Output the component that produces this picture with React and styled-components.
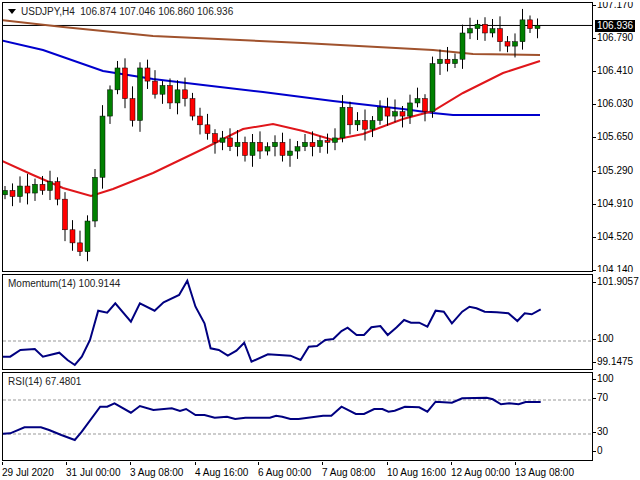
import React from 'react'
import styled, { createGlobalStyle } from 'styled-components'

const Global = createGlobalStyle`
  html, body { margin: 0; background: #fff; }
  body { font-family: "Liberation Sans", Arial, sans-serif; }
`

const closes = [105.05, 104.98, 105.1, 105.02, 105.12, 105.05, 105.15, 104.95, 104.6, 104.45, 104.35, 104.7,
  105.2, 105.9, 106.2, 106.45, 106.1, 105.85, 106.45, 106.3, 106.15, 106.25, 106.05, 106.2, 106.1, 105.9,
  105.8, 105.7, 105.6, 105.65, 105.55, 105.6, 105.45, 105.6, 105.5, 105.55, 105.6, 105.45, 105.5, 105.55,
  105.6, 105.55, 105.62, 105.6, 105.65, 106.0, 105.8, 105.85, 105.75, 105.85, 106.0, 105.9, 105.95, 105.9,
  106.05, 106.1, 105.95, 106.5, 106.55, 106.5, 106.55, 106.85, 106.9, 106.95, 106.85, 106.9, 106.75, 106.7,
  106.75, 107.0, 106.9, 106.936]

const py = p => 2 + (107.17 - p) * 87.46

const momentum = [[0,260],[25,260],[50,240],[85,237],[105,260],[145,248],[165,270],[183,285],[200,260],[220,210],[240,122],[262,128],[282,100],[320,155],[342,100],[378,122],[400,97],[438,75],[458,32],[478,110],[500,160],[515,235],[535,240],[557,257],[578,242],[597,218],[615,275],[655,253],[710,257],[735,270],[755,230],[775,228],[795,210],[815,207],[835,183],[850,173],[872,195],[890,195],[908,172],[930,168],[948,195],[970,172],[988,150],[1005,158],[1025,158],[1045,170],[1065,122],[1085,125],[1105,160],[1130,125],[1148,110],[1165,115],[1185,125],[1215,127],[1243,130],[1265,153],[1283,130],[1300,133],[1322,118]]
const rsi = [[0,492],[25,490],[60,472],[100,472],[120,480],[150,495],[183,510],[200,485],[245,410],[262,410],[280,400],[320,428],[342,408],[375,420],[420,415],[440,423],[455,417],[478,435],[500,435],[525,443],[555,440],[575,447],[600,443],[660,443],[675,437],[690,440],[710,447],[730,447],[790,437],[810,437],[835,410],[870,432],[890,432],[915,417],[935,417],[950,425],[965,422],[990,410],[1025,412],[1045,425],[1065,395],[1105,398],[1130,385],[1190,383],[1205,388],[1225,403],[1245,400],[1268,403],[1285,396],[1322,396]]

// zoom-space points -> panel-local pixels
const toPts = (arr, top) => arr.map(([x, y]) => `${(x * 0.409 - 3).toFixed(1)},${(y / 3 + 270 - top).toFixed(1)}`).join(' ')

const brown = '-3,17 60,24 150,33 300,40 430,47 470,51 537,52'
const blue = '-3,37 40,47 100,68 150,76 200,82 260,89 330,98 400,106 430,110 450,112 537,112'
const red = '-3,157 30,172 60,185 88,193 110,186 150,170 200,146 240,126 270,121 300,128 330,137 360,131 400,116 430,108 460,90 500,70 537,58'

const Page = styled.div`
  width: 640px;
  height: 480px;
  padding: 2px 0 0 2px;
  box-sizing: border-box;
  display: flex;
  flex-direction: column;
  gap: 2px;
  font-size: 10px;
  color: #000;
`

const Row = styled.div`
  display: flex;
  height: ${p => p.$h}px;
`

const Panel = styled.div`
  position: relative;
  width: 591px;
  border: 1px solid #000;
  box-sizing: border-box;
  overflow: hidden;
  svg { display: block; }
`

const Scale = styled.div`
  position: relative;
  flex: 1;
  overflow: hidden;
`

const Tick = styled.span`
  position: absolute;
  left: 0;
  padding-left: 4px;
  line-height: 12px;
  white-space: nowrap;
  &::before {
    content: '';
    position: absolute;
    left: 0;
    top: 6px;
    width: 3px;
    border-top: 1px solid #000;
  }
`

const PriceTag = styled.span`
  position: absolute;
  left: 2px;
  background: #000;
  color: #fff;
  padding: 0 2px;
  line-height: 12px;
`

const Title = styled.div`
  position: absolute;
  left: 5px;
  top: 3px;
  display: flex;
  align-items: center;
  gap: 5px;
  color: #222;
`

const Arrow = styled.span`
  width: 0;
  height: 0;
  border-left: 4px solid transparent;
  border-right: 4px solid transparent;
  border-top: 5px solid #000;
`

const TimeAxis = styled.div`
  position: relative;
  height: 18px;
  width: 591px;
`

const TimeLabel = styled.span`
  position: absolute;
  top: 4px;
  white-space: nowrap;
  &::before {
    content: '';
    position: absolute;
    left: 0;
    top: -5px;
    height: 3px;
    border-left: 1px solid #000;
  }
`

const priceLabels = ['107.170', '106.790', '106.410', '106.030', '105.650', '105.290', '104.910', '104.520', '104.140']
const times = [['29 Jul 2020', 0], ['31 Jul 00:00', 64], ['3 Aug 08:00', 128], ['4 Aug 16:00', 193], ['6 Aug 00:00', 256], ['7 Aug 08:00', 320], ['10 Aug 16:00', 385], ['12 Aug 00:00', 449], ['13 Aug 08:00', 513]]

const Candles = () => closes.map((c, i) => {
  const o = i === 0 ? 105.0 : closes[i - 1]
  const x = 2 + i * 7.5
  const up = c >= o
  const hi = Math.max(o, c) + 0.05 + ((i * 37) % 7) * 0.015
  const lo = Math.min(o, c) - 0.05 - ((i * 53) % 5) * 0.02
  const top = py(Math.max(o, c))
  const h = Math.max(1, Math.abs(py(o) - py(c)))
  const col = up ? '#008000' : '#ff0000'
  return (
    <g key={i}>
      <line x1={x} x2={x} y1={py(hi)} y2={py(lo)} stroke="#000" strokeWidth="1" />
      <rect x={x - 2.5} y={top} width="5" height={h} fill={col} stroke="#000" strokeWidth="0.5" />
    </g>
  )
})

export default function App () {
  return (
    <Page>
      <Global />
      <Row $h={270}>
        <Panel>
          <svg width="589" height="268">
            <line x1="0" x2="589" y1={py(106.936)} y2={py(106.936)} stroke="#000" strokeWidth="1" />
            <polyline points={brown} fill="none" stroke="#a0522d" strokeWidth="2" />
            <polyline points={blue} fill="none" stroke="#0000cd" strokeWidth="2" />
            <polyline points={red} fill="none" stroke="#e0161b" strokeWidth="2" />
            <Candles />
          </svg>
          <Title><Arrow />USDJPY,H4&nbsp; 106.874 107.046 106.860 106.936</Title>
        </Panel>
        <Scale>
          {priceLabels.map((l, i) => <Tick key={l} style={{ top: i * 33.1 - 3 }}>{l}</Tick>)}
          <PriceTag style={{ top: 18 }}>106.936</PriceTag>
        </Scale>
      </Row>
      <Row $h={96}>
        <Panel>
          <svg width="589" height="94">
            <line x1="0" x2="589" y1="66" y2="66" stroke="#999" strokeDasharray="3 2" />
            <polyline points={toPts(momentum, 275)} fill="none" stroke="#000080" strokeWidth="2" />
          </svg>
          <Title>Momentum(14) 100.9144</Title>
        </Panel>
        <Scale>
          <Tick style={{ top: 2 }}>101.9057</Tick>
          <Tick style={{ top: 59 }}>100</Tick>
          <Tick style={{ top: 82 }}>99.1475</Tick>
        </Scale>
      </Row>
      <Row $h={89}>
        <Panel>
          <svg width="589" height="87">
            <line x1="0" x2="589" y1="27" y2="27" stroke="#999" strokeDasharray="3 2" />
            <line x1="0" x2="589" y1="61" y2="61" stroke="#999" strokeDasharray="3 2" />
            <polyline points={toPts(rsi, 373)} fill="none" stroke="#000080" strokeWidth="2" />
          </svg>
          <Title>RSI(14) 67.4801</Title>
        </Panel>
        <Scale>
          <Tick style={{ top: 1 }}>100</Tick>
          <Tick style={{ top: 20 }}>70</Tick>
          <Tick style={{ top: 54 }}>30</Tick>
          <Tick style={{ top: 73 }}>0</Tick>
        </Scale>
      </Row>
      <TimeAxis>
        {times.map(([t, x]) => <TimeLabel key={t} style={{ left: x }}>{t}</TimeLabel>)}
      </TimeAxis>
    </Page>
  )
}
